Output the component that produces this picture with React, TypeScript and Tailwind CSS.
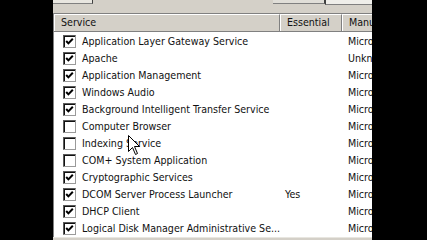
import React from "react";

const rows = [
  { name: "Application Layer Gateway Service", checked: true, essential: "", maker: "Microsoft Corporation" },
  { name: "Apache", checked: true, essential: "", maker: "Unknown" },
  { name: "Application Management", checked: true, essential: "", maker: "Microsoft Corporation" },
  { name: "Windows Audio", checked: true, essential: "", maker: "Microsoft Corporation" },
  { name: "Background Intelligent Transfer Service", checked: true, essential: "", maker: "Microsoft Corporation" },
  { name: "Computer Browser", checked: false, essential: "", maker: "Microsoft Corporation" },
  { name: "Indexing Service", checked: false, essential: "", maker: "Microsoft Corporation" },
  { name: "COM+ System Application", checked: false, essential: "", maker: "Microsoft Corporation" },
  { name: "Cryptographic Services", checked: true, essential: "", maker: "Microsoft Corporation" },
  { name: "DCOM Server Process Launcher", checked: true, essential: "Yes", maker: "Microsoft Corporation" },
  { name: "DHCP Client", checked: true, essential: "", maker: "Microsoft Corporation" },
  { name: "Logical Disk Manager Administrative Se...", checked: true, essential: "", maker: "Microsoft Corporation" },
];

function CheckBox({ checked }: { checked: boolean }) {
  return (
    <div className="w-[13px] h-[13px] shrink-0 border border-t-[#5a5a5a] border-l-[#5a5a5a] border-b-[#9a9a9a] border-r-[#9a9a9a] bg-white shadow-[inset_1px_1px_0_#111]">
      {checked && (
        <svg viewBox="0 0 11 11" className="w-[11px] h-[11px]">
          <polyline points="2.2,5 4.4,7.4 8.8,2.8" fill="none" stroke="#000" strokeWidth="2" />
        </svg>
      )}
    </div>
  );
}

function HeaderCell({ label, w }: { label: string; w: string }) {
  return (
    <div
      className={`${w} h-full shrink-0 flex items-center pl-[6px] border-r border-r-[#808080] border-t border-t-white border-l border-l-white overflow-hidden whitespace-nowrap`}
    >
      {label}
    </div>
  );
}

export default function App() {
  return (
    <div
      className="relative flex w-[427px] h-[240px] bg-black overflow-hidden text-[10.6px] text-[#111]"
      style={{ fontFamily: "'DejaVu Sans Condensed', 'Liberation Sans', sans-serif" }}
    >
      <div className="w-[53px] shrink-0" />
      <div className="w-[319px] shrink-0 flex flex-col bg-[#d4d0c8]">
        {/* bottoms of the buttons above */}
        <div className="h-[13px] shrink-0 flex items-start">
          <div className="w-[40px] h-[4px] bg-[#e8e6e0] border-r border-r-[#404040] border-b border-b-[#808080]" />
          <div className="w-[180px]" />
          <div className="w-[52px] h-[4px] bg-[#e0ded8] border-r border-r-[#404040] border-b border-b-[#808080]" />
          <div className="flex-1 h-[5px] bg-[#efeeea] border-l border-l-[#404040] border-b border-b-[#808080]" />
        </div>
        <div className="flex-1 flex flex-col border-t border-l border-t-[#808080] border-l-[#808080] bg-white">
          <div className="h-[18px] shrink-0 flex bg-[#d4d0c8] border-b border-b-[#808080]">
            <HeaderCell label="Service" w="w-[226px]" />
            <HeaderCell label="Essential" w="w-[62px]" />
            <div className="flex-1 flex items-center pl-[6px] border-t border-t-white border-l border-l-white overflow-hidden whitespace-nowrap">
              Manufacturer
            </div>
          </div>
          <div className="h-[1px] shrink-0" />
          {rows.map((r) => (
            <div key={r.name} className="h-[17px] shrink-0 flex items-center whitespace-nowrap">
              <div className="w-[226px] shrink-0 flex items-center gap-[6px] pl-[9px]">
                <CheckBox checked={r.checked} />
                <span>{r.name}</span>
              </div>
              <div className="w-[62px] shrink-0 pl-[5px]">{r.essential}</div>
              <div className="flex-1 pl-[6px] overflow-hidden">{r.maker}</div>
            </div>
          ))}
        </div>
        <div className="h-[4px] shrink-0 bg-[#d4d0c8] border-t border-t-[#e8e6e0]" />
      </div>
      <div className="flex-1" />
      {/* mouse pointer */}
      <svg className="absolute left-[128px] top-[135px]" width="13" height="21" viewBox="0 0 13 21">
        <path
          d="M0.5 0.5 L0.5 16.5 L4.5 12.5 L7.5 19.5 L9.5 18.5 L6.5 11.5 L11.5 11.5 Z"
          fill="#fff"
          stroke="#000"
          strokeWidth="1"
        />
      </svg>
    </div>
  );
}
